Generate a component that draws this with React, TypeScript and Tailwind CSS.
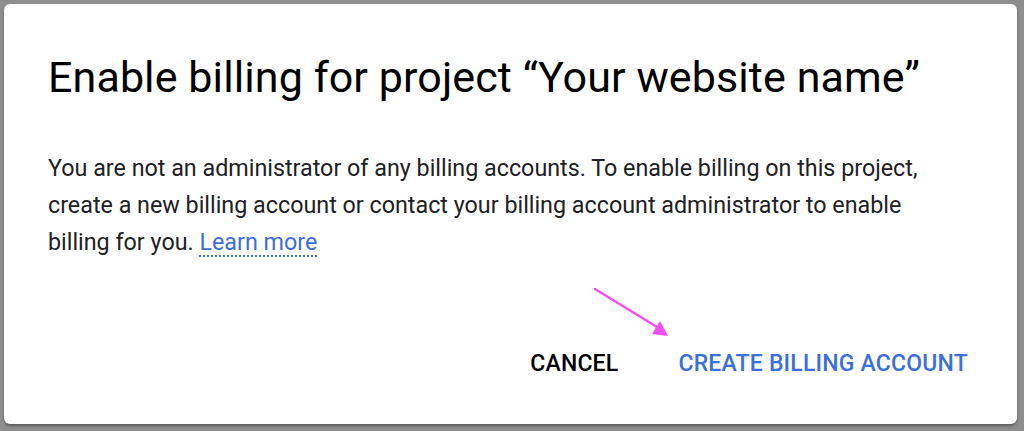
export default function App() {
  return (
    <div className="w-[1024px] h-[431px] bg-[#8e8e8e] p-[4px] pr-[7px] pb-[7px] font-['Roboto',sans-serif]">
      <div className="relative h-full rounded-[6px] bg-white shadow-[0_2px_3px_rgba(0,0,0,0.35)] pl-[44px] pr-[40px] pt-[48px] flex flex-col">
        <h1 className="text-[43px] leading-[50px] text-black tracking-[0.1px]">
          Enable billing for project “Your website name”
        </h1>
        <p className="mt-[48px] max-w-[895px] text-[23.3px] leading-[37px] text-[#202124]">
          You are not an administrator of any billing accounts. To enable billing on this project,
          create a new billing account or contact your billing account administrator to enable
          billing for you.{" "}
          <a href="#" className="text-[#3b6fd9] underline decoration-dotted decoration-[1.5px] underline-offset-[5px]">
            Learn more
          </a>
        </p>
        <div className="mt-auto mb-[45px] flex justify-end items-center gap-[60px] pr-[9px]">
          <button type="button" className="text-[23px] leading-[30px] font-medium text-black tracking-[0.2px]">
            CANCEL
          </button>
          <button type="button" className="text-[23px] leading-[30px] font-medium text-[#3b6fd9] tracking-[0.2px]">
            CREATE BILLING ACCOUNT
          </button>
        </div>
        <svg className="absolute left-[583px] top-[277px]" width="90" height="64" viewBox="0 0 90 64">
          <line x1="8" y1="8" x2="70" y2="46" stroke="#f24ef2" strokeWidth="2.5" strokeLinecap="round" />
          <polygon points="81,55 65,53 73,40" fill="#f24ef2" />
        </svg>
      </div>
    </div>
  );
}
